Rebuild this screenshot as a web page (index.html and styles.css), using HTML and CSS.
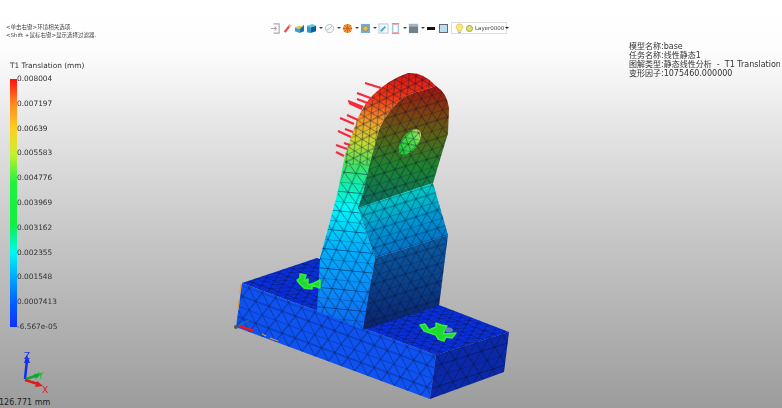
FILE: index.html
```html
<!DOCTYPE html>
<html lang="zh-CN">
<head>
  <meta charset="UTF-8">
  <title>线性静态分析</title>
  <link rel="stylesheet" href="styles.css">
</head>
<body>
  <div class="viewport">
    <!-- 模型 -->
    <svg class="model" viewBox="0 0 782 408" width="782" height="408">
      <defs>
        <linearGradient id="strip" gradientUnits="userSpaceOnUse" x1="0" y1="73" x2="0" y2="330">
          <stop offset="0" stop-color="#d81414"/>
          <stop offset=".1" stop-color="#ee3a14"/>
          <stop offset=".19" stop-color="#f0a02a"/>
          <stop offset=".27" stop-color="#c8dc30"/>
          <stop offset=".36" stop-color="#40e060"/>
          <stop offset=".44" stop-color="#10eeb0"/>
          <stop offset=".52" stop-color="#00f8f8"/>
          <stop offset=".68" stop-color="#00b0fa"/>
          <stop offset=".86" stop-color="#0a88f8"/>
          <stop offset="1" stop-color="#0a62f0"/>
        </linearGradient>
        <linearGradient id="faceUpper" gradientUnits="userSpaceOnUse" x1="405" y1="85" x2="405" y2="205">
          <stop offset="0" stop-color="#a01212"/>
          <stop offset=".2" stop-color="#823a10"/>
          <stop offset=".42" stop-color="#5a6414"/>
          <stop offset=".68" stop-color="#1c8430"/>
          <stop offset="1" stop-color="#0a7060"/>
        </linearGradient>
        <linearGradient id="faceMid" gradientUnits="userSpaceOnUse" x1="398" y1="192" x2="412" y2="250">
          <stop offset="0" stop-color="#00d0c4"/>
          <stop offset=".5" stop-color="#0098d0"/>
          <stop offset="1" stop-color="#0070c8"/>
        </linearGradient>
        <linearGradient id="faceLower" gradientUnits="userSpaceOnUse" x1="400" y1="245" x2="405" y2="325">
          <stop offset="0" stop-color="#0a5aa0"/>
          <stop offset="1" stop-color="#0a2470"/>
        </linearGradient>
        <linearGradient id="hole" gradientUnits="userSpaceOnUse" x1="415" y1="128" x2="404" y2="155">
          <stop offset="0" stop-color="#e8e070"/>
          <stop offset=".3" stop-color="#60e050"/>
          <stop offset="1" stop-color="#18c838"/>
        </linearGradient>
        <pattern id="meshFront" width="14" height="22" patternUnits="userSpaceOnUse" patternTransform="matrix(.94 .35 0 1 236 327)">
          <path class="mesh" d="M0 0H14M0 11H14M0 0L7 11L14 0M0 22L7 11L14 22"/>
        </pattern>
        <pattern id="meshTop" width="9" height="14" patternUnits="userSpaceOnUse" patternTransform="matrix(.94 .35 .95 -.32 242 283)">
          <path class="mesh" d="M0 0H9M0 7H9M0 0L4.500 7L9 0M0 14L4.500 7L9 14"/>
        </pattern>
        <pattern id="meshSide" width="14" height="22" patternUnits="userSpaceOnUse" patternTransform="matrix(.95 -.3 -.1 1 436 355)">
          <path class="mesh" d="M0 0H14M0 11H14M0 0L7 11L14 0M0 22L7 11L14 22"/>
        </pattern>
        <pattern id="meshStrip" width="12" height="20" patternUnits="userSpaceOnUse" patternTransform="matrix(1 .1 .2 1 320 258)">
          <path class="mesh" d="M0 0H12M0 10H12M0 0L6 10L12 0M0 20L6 10L12 20"/>
        </pattern>
        <pattern id="meshRim" width="8" height="13" patternUnits="userSpaceOnUse" patternTransform="matrix(.9 -.45 .45 .9 357 120)">
          <path class="mesh" d="M0 0H8M0 6.500H8M0 0L4 6.500L8 0M0 13L4 6.500L8 13"/>
        </pattern>
        <pattern id="meshRib" width="11" height="18" patternUnits="userSpaceOnUse" patternTransform="matrix(.96 -.3 0 1 358 208)">
          <path class="mesh" d="M0 0H11M0 9H11M0 0L5.500 9L11 0M0 18L5.500 9L11 18"/>
        </pattern>
      </defs>

      <!-- 底座 -->
      <polygon points="242,283 317,258 509,332 436,355" fill="#0a2ed8"/>
      <polygon points="242,283 317,258 509,332 436,355" fill="url(#meshTop)"/>
      <polygon points="242,283 436,355 430,399 236,327" fill="#0e52f2"/>
      <polygon points="242,283 436,355 430,399 236,327" fill="url(#meshFront)"/>
      <polygon points="436,355 509,332 504,372 430,399" fill="#0a28a8"/>
      <polygon points="436,355 509,332 504,372 430,399" fill="url(#meshSide)"/>

      <!-- 筋板 -->
      <path d="M317 311L320 258L337 195L345 155L357 120Q364 104 373 95Q388 80 408 73Q424 72 436 86L424 90Q405 94 397 103Q384 116 378 133L370 163L363 193L358 208L375 258L363 330Z" fill="url(#strip)"/>
      <path d="M317 311L320 258L337 195L345 165L378 165L370 193L358 208L375 258L363 330Z" fill="url(#meshStrip)"/>
      <path d="M345 165L345 155L357 120Q364 104 373 95Q388 80 408 73Q424 72 436 86L424 90Q405 94 397 103Q384 116 378 133L370 165Z" fill="url(#meshRim)"/>
      <path d="M424 90L436 86Q447 93 449 108L448 133L433 183L358 208L363 193L370 163L378 133Q384 116 397 103Q405 94 424 90Z" fill="url(#faceUpper)"/>
      <path d="M424 90L436 86Q447 93 449 108L448 133L433 183L358 208L363 193L370 163L378 133Q384 116 397 103Q405 94 424 90Z" fill="url(#meshRib)"/>
      <polygon points="358,208 433,183 448,235 375,258" fill="url(#faceMid)"/>
      <polygon points="358,208 433,183 448,235 375,258" fill="url(#meshRib)"/>
      <polygon points="375,258 448,235 439,306 363,330" fill="url(#faceLower)"/>
      <polygon points="375,258 448,235 439,306 363,330" fill="url(#meshRib)"/>

      <!-- 孔 -->
      <ellipse cx="410" cy="142" rx="8" ry="15" transform="rotate(38 410 142)" fill="url(#hole)"/>
      <ellipse cx="410" cy="142" rx="8" ry="15" transform="rotate(38 410 142)" fill="url(#meshRim)"/>

      <!-- 载荷 -->
      <g class="load">
        <path d="M365 83L381 88M357 93L373 99M357 99L370 104M348 101L363 107M349 103L362 109"/>
        <path d="M347 115L358 120M340 118L354 124M345 129L353 132M338 131L351 137M344 143L350 145M336 145L347 149M336 152L344 156"/>
      </g>

      <!-- 约束 -->
      <path class="patch" d="M297 280L300 278L300 274L306 275L304 281L308 279L308 285L314 283L320 280L320 288L312 285L312 289L304 288L300 284Z"/>
      <path class="patch" d="M420 325L425 324L429 330L436 327L436 323L441 325L447 326L443 334L456 333L452 338L446 337L444 341L438 339L436 335L430 333L424 331Z"/>
      <ellipse cx="449" cy="330" rx="4" ry="2.500" fill="#6a7ac8"/>
      <g class="marks">
        <path d="M241 284L240 293M239 300L238 310M262 334L266 336M270 338L278 341"/>
      </g>
      <path d="M239 326L254 331" stroke="#e81818" stroke-width="2.500"/>
      <circle cx="236" cy="327" r="2" fill="#555"/>
      <path d="M238 326L249 320" stroke="#20808a" stroke-width="1"/>
    </svg>

    <!-- 提示 -->
    <div class="hint">
      <div>&lt;单击右键&gt;环境相关选项.</div>
      <div>&lt;Shift +鼠标右键&gt;显示选择过滤器.</div>
    </div>

    <!-- 工具栏 -->
    <div class="toolbar">
      <svg class="tool" viewBox="0 0 12 12"><path d="M4 1H10V11H4M1 6H7M5 4L7 6L5 8" fill="none" stroke="#a8a8a8" stroke-width="1.200"/></svg>
      <svg class="tool" viewBox="0 0 12 12"><path d="M3 10L9 2" stroke="#e05050" stroke-width="2.500"/><circle cx="9" cy="3" r="1.500" fill="#e8c8c0"/></svg>
      <svg class="tool" viewBox="0 0 12 12"><path d="M1 5L6 3L11 5L6 7Z" fill="#f0c020"/><path d="M1 5V9L6 11V7Z" fill="#30a0d8"/><path d="M11 2V9L6 11V7Z" fill="#1870b0"/></svg>
      <div class="tool-group"><svg class="tool" viewBox="0 0 12 12"><path d="M1 3L7 1L11 3L5 5Z" fill="#60c8e8"/><path d="M1 3V10L5 11V5Z" fill="#20a0d0"/><path d="M11 3V9L5 11V5Z" fill="#105f90"/></svg><span class="caret"></span></div>
      <div class="tool-group"><svg class="tool" viewBox="0 0 12 12"><circle cx="6" cy="6" r="4.500" fill="#f4f8fa" stroke="#a8c0c8"/><path d="M6 6L9 3M6 6L3 8" stroke="#a8b8c0"/></svg><span class="caret"></span></div>
      <div class="tool-group"><svg class="tool" viewBox="0 0 12 12"><circle cx="6" cy="6" r="5" fill="#f0983a"/><circle cx="6" cy="6" r="2" fill="#f8e0a0"/><path d="M6 1V11M1 6H11M2.500 2.500L9.500 9.500M9.500 2.500L2.500 9.500" stroke="#d06020"/></svg><span class="caret"></span></div>
      <div class="tool-group"><svg class="tool" viewBox="0 0 12 12"><rect x="1" y="1" width="10" height="10" fill="#70b0d8"/><circle cx="6" cy="6" r="3" fill="#d8c070" stroke="#a88030"/></svg><span class="caret"></span></div>
      <svg class="tool" viewBox="0 0 12 12"><rect x="1" y="1" width="10" height="10" fill="#f4f8fa" stroke="#a8c8d8"/><path d="M3 9L8 4" stroke="#50a0c8" stroke-width="2"/></svg>
      <div class="tool-group"><svg class="tool" viewBox="0 0 12 12"><path d="M2 1H10M2 11H10" stroke="#e06070" stroke-width="1.500"/><path d="M3 2V10M9 2V10" stroke="#70b0e0"/></svg><span class="caret"></span></div>
      <div class="tool-group"><svg class="tool" viewBox="0 0 12 12"><rect x="1" y="1" width="10" height="10" fill="#70808c"/><rect x="1" y="1" width="10" height="3" fill="#a8b4bc"/></svg><span class="caret"></span></div>
      <span class="line-swatch"></span>
      <span class="color-swatch"></span>
      <div class="layer-box">
        <svg class="tool" viewBox="0 0 12 12"><path d="M6 1A3.500 3.500 0 0 1 8 7.500V9H4V7.500A3.500 3.500 0 0 1 6 1Z" fill="#f8e878" stroke="#c8b040" stroke-width=".6"/><path d="M4.500 10.500H7.500" stroke="#999"/></svg>
        <span class="layer-dot"></span>
        <span class="layer-name">Layer0000</span>
        <span class="caret caret-dark"></span>
      </div>
    </div>

    <!-- 模型信息 -->
    <div class="info">
      <div>模型名称:base</div>
      <div>任务名称:线性静态1</div>
      <div>图解类型:静态线性分析&nbsp;&nbsp;-&nbsp;&nbsp;T1 Translation</div>
      <div>变形因子:1075460.000000</div>
    </div>

    <!-- 图例 -->
    <div class="legend">
      <div class="legend-title">T1 Translation (mm)</div>
      <div class="legend-body">
        <div class="legend-bar"></div>
        <div class="legend-labels">
          <span>0.008004</span>
          <span>0.007197</span>
          <span>0.00639</span>
          <span>0.005583</span>
          <span>0.004776</span>
          <span>0.003969</span>
          <span>0.003162</span>
          <span>0.002355</span>
          <span>0.001548</span>
          <span>0.0007413</span>
          <span>-6.567e-05</span>
        </div>
      </div>
    </div>

    <!-- 坐标轴 -->
    <div class="triad">
      <svg viewBox="0 0 50 42" width="50" height="42">
        <path d="M23 27L25 8" stroke="#1030f0" stroke-width="2.500"/>
        <path d="M25 3L28 11H22Z" fill="#1030f0"/>
        <path d="M24 27L36 23" stroke="#10a830" stroke-width="2.500"/>
        <path d="M40 21L34 27L32 22Z" fill="#10a830"/>
        <path d="M23 28L36 32" stroke="#e01820" stroke-width="2.500"/>
        <path d="M41 34L33 35L35 29Z" fill="#e01820"/>
        <text x="22" y="7" class="axis-z">Z</text>
        <text x="36" y="27" class="axis-y">Y</text>
        <text x="40" y="41" class="axis-x">X</text>
      </svg>
    </div>
    <div class="scale">126.771 mm</div>
  </div>
</body>
</html>
```

FILE: styles.css
```css
* {
  margin: 0;
  padding: 0;
  box-sizing: border-box;
}

body {
  width: 782px;
  height: 408px;
  overflow: hidden;
  font-family: "DejaVu Sans", "Noto Sans CJK SC", sans-serif;
  color: #333;
}

.viewport {
  position: relative;
  width: 782px;
  height: 408px;
  overflow: hidden;
  background: linear-gradient(to bottom, #fff 0, #fdfdfd 50px, #e4e4e4 130px, #c8c8c8 230px, #b0b0b0 328px, #9c9c9c 408px);
}

.model {
  position: absolute;
  top: 0;
  left: 0;
  filter: blur(.4px);
}

.mesh {
  fill: none;
  stroke: #061030;
  stroke-opacity: .7;
  stroke-width: .7;
}

.load path {
  fill: none;
  stroke: #f52a3a;
  stroke-width: 2.200;
}

.patch {
  fill: #22d830;
  stroke: #30f040;
  stroke-width: 1.500;
  stroke-linejoin: round;
}

.marks path {
  fill: none;
  stroke: #d89a50;
  stroke-width: 1.200;
}

/* 提示 */
.hint {
  position: absolute;
  top: 23px;
  left: 6px;
  font-size: 5.500px;
  line-height: 8px;
  color: #444;
  filter: blur(.3px);
}

/* 工具栏 */
.toolbar {
  position: absolute;
  top: 22px;
  left: 270px;
  display: flex;
  align-items: center;
  gap: 1px;
  height: 12px;
  filter: blur(.4px);
}

.tool {
  display: block;
  width: 11px;
  height: 11px;
  flex: none;
}

.tool-group {
  display: flex;
  align-items: center;
  gap: 2px;
}

.caret {
  flex: none;
  width: 0;
  height: 0;
  border-left: 2px solid transparent;
  border-right: 2px solid transparent;
  border-top: 2px solid #444;
}

.caret-dark {
  margin-left: auto;
  border-top-color: #222;
}

.line-swatch {
  width: 8px;
  height: 3px;
  margin-left: 1px;
  background: #111;
}

.color-swatch {
  width: 9px;
  height: 9px;
  margin-left: 3px;
  background: #b8e0f0;
  border: 1px solid #667;
}

.layer-box {
  display: flex;
  align-items: center;
  gap: 1px;
  width: 56px;
  height: 12px;
  margin-left: 2px;
  padding: 0 3px 0 2px;
  background: #fff;
  border: 1px solid #ddd;
}

.layer-dot {
  flex: none;
  width: 7px;
  height: 7px;
  border-radius: 50%;
  background: #e8e070;
  border: 1px solid #98a040;
}

.layer-name {
  font-size: 5.500px;
  color: #444;
  margin-left: 1px;
}

/* 模型信息 */
.info {
  position: absolute;
  top: 41.500px;
  left: 629px;
  width: 151px;
  overflow: hidden;
  white-space: nowrap;
  font-size: 8px;
  line-height: 9.300px;
  color: #333;
  filter: blur(.25px);
}

/* 图例 */
.legend {
  position: absolute;
  top: 61px;
  left: 10px;
  filter: blur(.25px);
}

.legend-title {
  font-size: 7.400px;
  line-height: 10px;
  margin-bottom: 8px;
  white-space: nowrap;
  color: #333;
}

.legend-body {
  display: flex;
  height: 248px;
}

.legend-bar {
  width: 7px;
  background: linear-gradient(to bottom, #ff1010 0, #ff8a20 10%, #ffd020 20%, #c8f030 30%, #20f040 42%, #10f040 58%, #00f8f0 70%, #00a8ff 80%, #0060ff 90%, #1030ff 100%);
}

.legend-labels {
  display: flex;
  flex-direction: column;
  justify-content: space-between;
  height: 256px;
  margin-top: -4px;
  font-size: 7.400px;
  line-height: 8px;
  color: #333;
}

/* 坐标轴 */
.triad {
  position: absolute;
  top: 352px;
  left: 2px;
  line-height: 0;
  filter: blur(.3px);
}

.axis-z,
.axis-y,
.axis-x {
  font-size: 9px;
}

.axis-z {
  fill: #1030f0;
}

.axis-y {
  fill: #20c040;
}

.axis-x {
  fill: #e01820;
}

.scale {
  position: absolute;
  left: -1px;
  top: 398px;
  font-size: 8px;
  line-height: 10px;
  color: #222;
}
```
